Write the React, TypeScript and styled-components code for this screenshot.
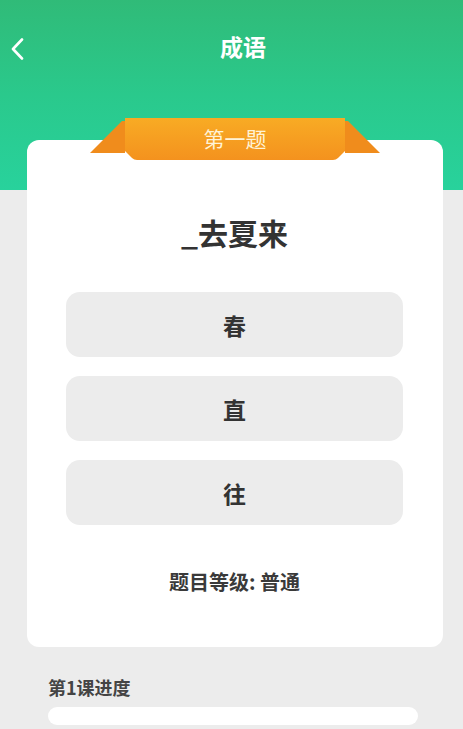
import React from "react";
import styled, { createGlobalStyle } from "styled-components";

const Global = createGlobalStyle`
  html, body { margin: 0; padding: 0; background: #ececec; }
  body { font-family: "Noto Sans CJK SC", "Noto Sans", sans-serif; }
  * { box-sizing: border-box; }
`;

const Page = styled.div`
  width: 463px;
  min-height: 729px;
  background: #ececec;
  display: flex;
  flex-direction: column;
  overflow: hidden;
`;

const Header = styled.header`
  height: 190px;
  background: linear-gradient(180deg, #30bb78 0%, #2ac98c 50%, #28d29c 100%);
  display: flex;
  flex-direction: column;
`;

const NavBar = styled.div`
  height: 92px;
  display: flex;
  align-items: center;
  justify-content: center;
  position: relative;
`;

const BackButton = styled.button`
  position: absolute;
  left: 4px;
  top: 34px;
  width: 26px;
  height: 30px;
  border: none;
  background: transparent;
  padding: 0;
  display: flex;
  align-items: center;
  justify-content: center;
`;

const NavTitle = styled.h1`
  margin: 0 0 0 23px;
  font-size: 23px;
  font-weight: 700;
  color: #ffffff;
  line-height: 1;
`;

const Card = styled.section`
  position: relative;
  margin: -50px 20px 0 27px;
  background: #ffffff;
  border-radius: 12px;
  padding: 72px 40px 53px 39px;
  display: flex;
  flex-direction: column;
  align-items: stretch;
`;

const Ribbon = styled.div`
  position: absolute;
  left: 63px;
  top: -22px;
  width: 290px;
  height: 42px;
  display: flex;
  align-items: center;
  justify-content: center;
`;

const RibbonShape = styled.svg`
  position: absolute;
  inset: 0;
`;

const RibbonLabel = styled.span`
  position: relative;
  font-size: 21px;
  color: #fff3d6;
  font-weight: 400;
  line-height: 1;
  margin-top: -2px;
`;

const Question = styled.h2`
  margin: 0;
  text-align: center;
  font-size: 30px;
  line-height: 40px;
  font-weight: 700;
  color: #333333;
`;

const Options = styled.div`
  margin-top: 40px;
  display: flex;
  flex-direction: column;
  gap: 19px;
`;

const OptionButton = styled.button`
  height: 65px;
  border: none;
  border-radius: 14px;
  background: #ececec;
  font-family: inherit;
  font-size: 23px;
  font-weight: 700;
  color: #333333;
  display: flex;
  align-items: center;
  justify-content: center;
`;

const Level = styled.p`
  margin: 45px 0 0;
  text-align: center;
  font-size: 20px;
  line-height: 24px;
  font-weight: 700;
  color: #3a3a3a;
`;

const Progress = styled.div`
  margin: 28px 45px 0 48px;
  display: flex;
  flex-direction: column;
  gap: 8px;
`;

const ProgressLabel = styled.div`
  font-size: 18px;
  line-height: 24px;
  font-weight: 700;
  color: #444444;
`;

const ProgressTrack = styled.div`
  height: 18px;
  border-radius: 9px;
  background: #ffffff;
`;

export default function App() {
  const options = ["春", "直", "往"];
  return (
    <Page>
      <Global />
      <Header>
        <NavBar>
          <BackButton aria-label="返回">
            <svg width="14" height="22" viewBox="0 0 14 22">
              <path d="M12 1.5 L3 11 L12 20.5" fill="none" stroke="#ffffff" strokeWidth="2.6" strokeLinecap="round" strokeLinejoin="round" />
            </svg>
          </BackButton>
          <NavTitle>成语</NavTitle>
        </NavBar>
      </Header>
      <Card>
        <Ribbon>
          <RibbonShape width="290" height="42" viewBox="0 0 290 42">
            <defs>
              <linearGradient id="rb" x1="0" y1="0" x2="0" y2="1">
                <stop offset="0" stopColor="#f8ab24" />
                <stop offset="1" stopColor="#f4921e" />
              </linearGradient>
            </defs>
            <polygon points="0,35 32,3 35,3 35,35" fill="#f08c1c" />
            <polygon points="290,35 258,3 255,3 255,35" fill="#f08c1c" />
            <path d="M35 0 H255 V33 L248 40 Q246 42 243 42 H47 Q44 42 42 40 L35 33 Z" fill="url(#rb)" />
          </RibbonShape>
          <RibbonLabel>第一题</RibbonLabel>
        </Ribbon>
        <Question>_去夏来</Question>
        <Options>
          {options.map((o) => (
            <OptionButton key={o}>{o}</OptionButton>
          ))}
        </Options>
        <Level>题目等级: 普通</Level>
      </Card>
      <Progress>
        <ProgressLabel>第1课进度</ProgressLabel>
        <ProgressTrack />
      </Progress>
    </Page>
  );
}
